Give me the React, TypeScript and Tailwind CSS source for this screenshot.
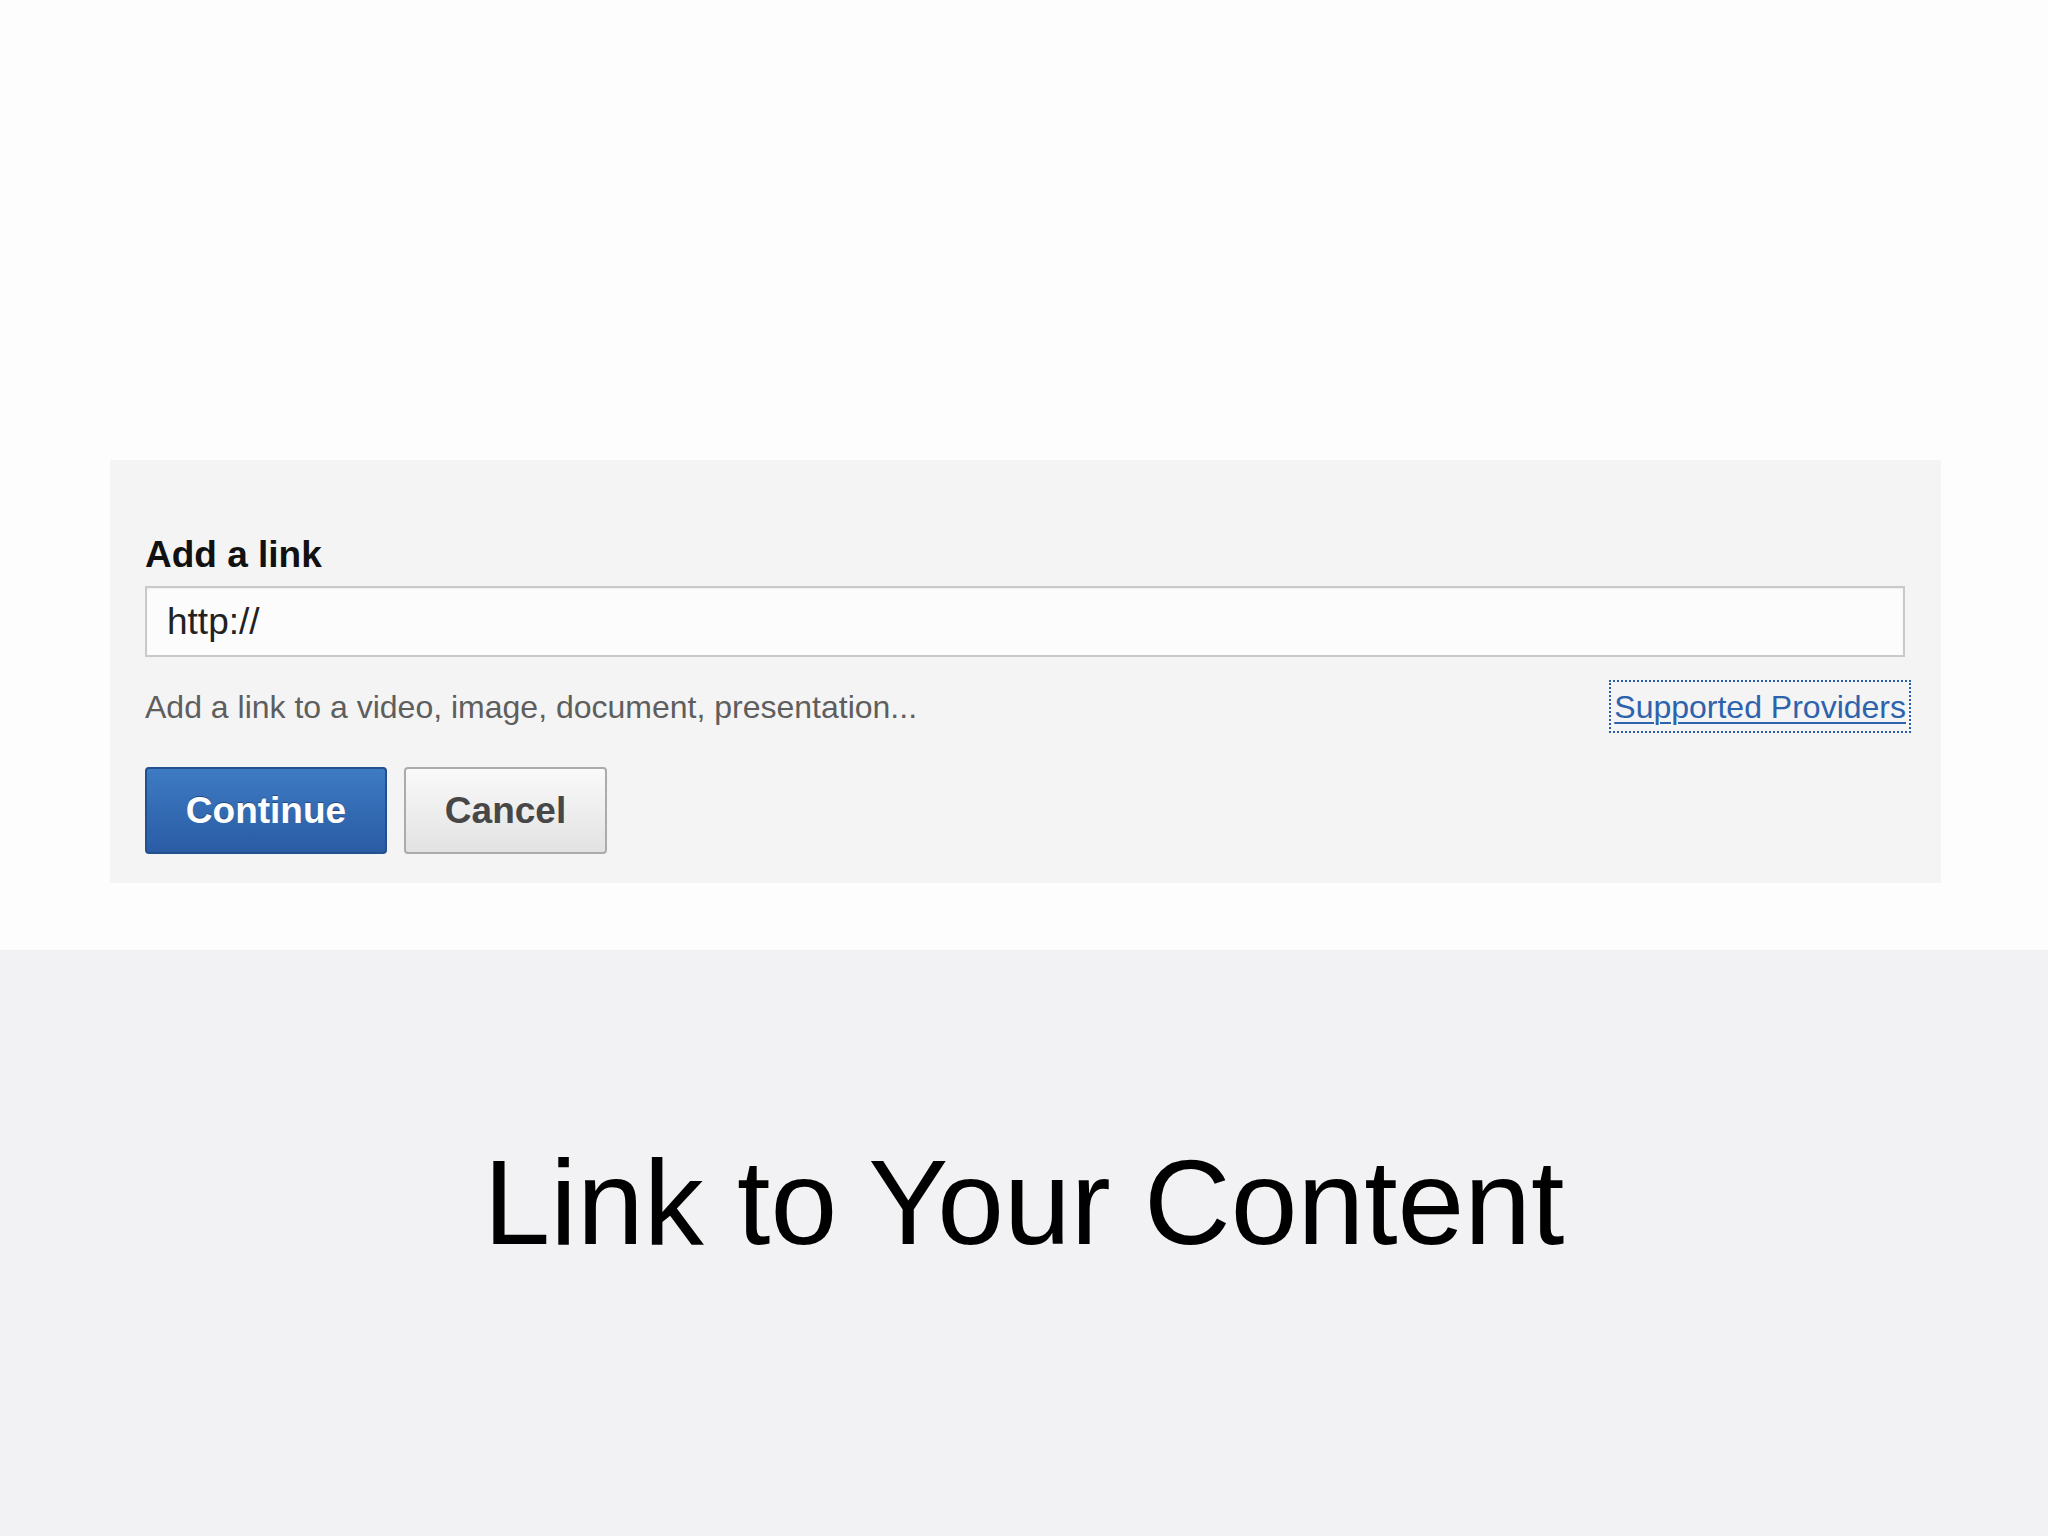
import React from "react";

export default function App() {
  return (
    <div
      className="w-[2048px] h-[1536px] flex flex-col overflow-hidden"
      style={{ fontFamily: '"Liberation Sans", Arial, sans-serif' }}
    >
      <div className="h-[950px] bg-[#fdfdfd] pt-[460px] pl-[110px]">
        <div className="w-[1831px] h-[423px] bg-[#f4f4f4] pl-[35px] pr-[36px] pt-[75px] flex flex-col">
          <div className="text-[37px] leading-[40px] font-bold text-[#111111]">
            Add a link
          </div>
          <div className="mt-[11px] h-[71px] border-2 border-[#c9c9c9] bg-[#fcfcfd] flex items-center pl-[20px] shadow-[inset_0_1px_2px_rgba(0,0,0,0.06)]">
            <span className="text-[37px] leading-[42px] text-[#222222]">http://</span>
          </div>
          <div className="mt-[23px] h-[53px] flex items-center justify-between">
            <span className="text-[32px] leading-[36px] text-[#5e5e5e]">
              Add a link to a video, image, document, presentation...
            </span>
            <span className="-mr-[6px] h-[53px] border-2 border-dotted border-[#2a5ea8] px-[3px] flex items-center">
              <span className="text-[32px] leading-[36px] text-[#2d62ad] underline decoration-2 underline-offset-[4px]">
                Supported Providers
              </span>
            </span>
          </div>
          <div className="mt-[34px] flex gap-[17px]">
            <button className="w-[242px] h-[87px] rounded-[4px] border-2 border-[#23508f] bg-gradient-to-b from-[#3d7bc3] to-[#2a5ca4] text-white font-bold text-[37px] leading-[40px] [text-shadow:0_-1px_0_rgba(0,0,0,0.35)]">
              Continue
            </button>
            <button className="w-[203px] h-[87px] rounded-[4px] border-2 border-[#ababab] bg-gradient-to-b from-[#fafafa] to-[#e2e2e2] text-[#474747] font-bold text-[37px] leading-[40px]">
              Cancel
            </button>
          </div>
        </div>
      </div>
      <div className="flex-1 bg-[#f2f1f3] pt-[192px] flex justify-center">
        <div className="text-[120px] leading-[120px] text-black">
          Link to Your Content
        </div>
      </div>
    </div>
  );
}
